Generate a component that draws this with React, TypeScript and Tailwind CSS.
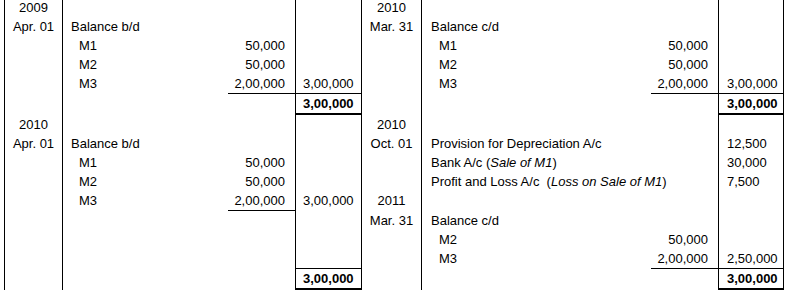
import React from 'react';

type Row = {
  h: 19 | 20 | 21;
  cells: React.ReactNode[];
  thin?: number[];
  thick?: number[];
};

const heights = {
  19: 'h-[19px]',
  20: 'h-[20px]',
  21: 'h-[21px]',
};

// base style of the 8 ledger columns (Dr. side then Cr. side)
const colClass = [
  'border-l border-black text-center',
  'border-l border-black pl-2',
  'text-right pr-[10px]',
  'border-l border-black pl-[7px]',
  'border-l border-black text-center',
  'border-l border-black pl-[9px]',
  'text-right pr-[10px]',
  'border-l border-r border-black pl-[8px]',
];

const Sub = ({ children }: { children: React.ReactNode }) => (
  <span className="pl-2">{children}</span>
);

const Total = ({ children }: { children: React.ReactNode }) => (
  <span className="font-bold">{children}</span>
);

const rows: Row[] = [
  { h: 19, cells: ['2009', '', '', '', '2010', '', '', ''] },
  { h: 19, cells: ['Apr. 01', 'Balance b/d', '', '', 'Mar. 31', 'Balance c/d', '', ''] },
  { h: 19, cells: ['', <Sub>M1</Sub>, '50,000', '', '', <Sub>M1</Sub>, '50,000', ''] },
  { h: 19, cells: ['', <Sub>M2</Sub>, '50,000', '', '', <Sub>M2</Sub>, '50,000', ''] },
  {
    h: 20,
    cells: ['', <Sub>M3</Sub>, '2,00,000', '3,00,000', '', <Sub>M3</Sub>, '2,00,000', '3,00,000'],
    thin: [2, 3, 6, 7],
  },
  {
    h: 21,
    cells: ['', '', '', <Total>3,00,000</Total>, '', '', '', <Total>3,00,000</Total>],
    thick: [3, 7],
  },
  { h: 19, cells: ['2010', '', '', '', '2010', '', '', ''] },
  {
    h: 19,
    cells: ['Apr. 01', 'Balance b/d', '', '', 'Oct. 01', 'Provision for Depreciation A/c', '', '12,500'],
  },
  {
    h: 19,
    cells: [
      '',
      <Sub>M1</Sub>,
      '50,000',
      '',
      '',
      <>
        Bank A/c (<i>Sale of M1</i>)
      </>,
      '',
      '30,000',
    ],
  },
  {
    h: 19,
    cells: [
      '',
      <Sub>M2</Sub>,
      '50,000',
      '',
      '',
      <>
        {'Profit and Loss A/c  ('}
        <i>Loss on Sale of M1</i>)
      </>,
      '',
      '7,500',
    ],
  },
  {
    h: 20,
    cells: ['', <Sub>M3</Sub>, '2,00,000', '3,00,000', '2011', '', '', ''],
    thin: [2],
  },
  { h: 19, cells: ['', '', '', '', 'Mar. 31', 'Balance c/d', '', ''] },
  { h: 19, cells: ['', '', '', '', '', <Sub>M2</Sub>, '50,000', ''] },
  {
    h: 20,
    cells: ['', '', '', '', '', <Sub>M3</Sub>, '2,00,000', '2,50,000'],
    thin: [3, 6, 7],
  },
  {
    h: 21,
    cells: ['', '', '', <Total>3,00,000</Total>, '', '', '', <Total>3,00,000</Total>],
    thick: [3, 7],
  },
];

export default function App() {
  return (
    <div className="w-[789px] h-[291px] overflow-hidden bg-white">
      <div className="-mt-[2px] ml-1 w-[780px] font-['Liberation_Sans',Arial,sans-serif] text-[13px] leading-[19px] text-black">
        {rows.map((row, r) => (
          <div
            key={r}
            className={`grid grid-cols-[58px_166px_67px_66px_60px_230px_67px_66px] ${heights[row.h]}`}
          >
            {row.cells.map((cell, c) => {
              const line = row.thick?.includes(c)
                ? 'border-b-2 border-b-black'
                : row.thin?.includes(c)
                  ? 'border-b border-b-black'
                  : '';
              return (
                <div key={c} className={`whitespace-pre ${colClass[c]} ${line}`}>
                  {cell}
                </div>
              );
            })}
          </div>
        ))}
      </div>
    </div>
  );
}
